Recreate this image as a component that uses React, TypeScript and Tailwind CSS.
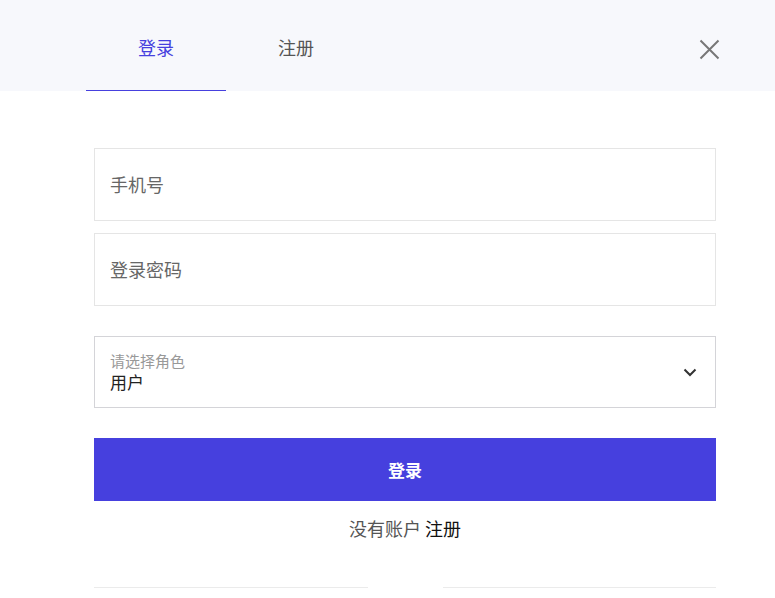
import React, { useState } from 'react';

const font = { fontFamily: '"Noto Sans CJK SC", "Noto Sans", sans-serif' };

export default function App() {
  const [tab, setTab] = useState<'login' | 'register'>('login');

  return (
    <div className="min-h-screen w-[775px] bg-white" style={font}>
      {/* Header tabs */}
      <div className="flex h-[91px] items-stretch bg-[#f7f8fc] pl-[86px] pr-[55px]">
        {[
          { key: 'login', label: '登录' },
          { key: 'register', label: '注册' }
        ].map((t) => (
          <button
            key={t.key}
            onClick={() => setTab(t.key as 'login' | 'register')}
            className={
              t.key === tab
                ? 'flex w-[140px] items-center justify-center border-b border-[#4640de] pt-[4px] text-[18px] text-[#4640de]'
                : 'flex w-[140px] items-center justify-center border-b border-transparent pt-[4px] text-[18px] text-[#555]'
            }
          >
            {t.label}
          </button>
        ))}
        <div className="flex-1" />
        <button className="flex items-center pt-[7px] text-[#777]">
          <svg width="21" height="21" viewBox="0 0 21 21" fill="none" stroke="currentColor" strokeWidth="2">
            <path d="M1.5 1.5 L19.5 19.5 M19.5 1.5 L1.5 19.5" />
          </svg>
        </button>
      </div>

      {/* Form */}
      <div className="flex flex-col pl-[94px] pr-[59px] pt-[57px]">
        <div className="flex h-[73px] items-center border border-[#e5e5e5] px-[15px]">
          <input
            placeholder="手机号"
            className="w-full bg-transparent text-[18px] text-[#333] outline-none placeholder:text-[#666]"
          />
        </div>
        <div className="mt-[12px] flex h-[73px] items-center border border-[#e5e5e5] px-[15px]">
          <input
            type="password"
            placeholder="登录密码"
            className="w-full bg-transparent text-[18px] text-[#333] outline-none placeholder:text-[#666]"
          />
        </div>

        <div className="mt-[30px] flex h-[72px] items-center border border-[#d4d4d8] pl-[15px] pr-[18px]">
          <div className="flex flex-1 flex-col">
            <span className="text-[15px] leading-[20px] text-[#999]">请选择角色</span>
            <span className="text-[17px] leading-[22px] text-[#222]">用户</span>
          </div>
          <svg width="14" height="9" viewBox="0 0 14 9" fill="none" stroke="#333" strokeWidth="2">
            <path d="M1.5 1.5 L7 7 L12.5 1.5" />
          </svg>
        </div>

        <button className="mt-[30px] flex h-[63px] items-center justify-center bg-[#4640de] text-[17px] font-bold text-white">
          登录
        </button>

        <div className="mt-[14px] text-center text-[18px] text-[#555]">
          没有账户 <span className="text-[#111]">注册</span>
        </div>

        <div className="mt-[45px] flex items-center gap-[75px]">
          <div className="h-px flex-1 bg-[#ebebeb]" />
          <div className="h-px flex-1 bg-[#ebebeb]" />
        </div>
      </div>
    </div>
  );
}
